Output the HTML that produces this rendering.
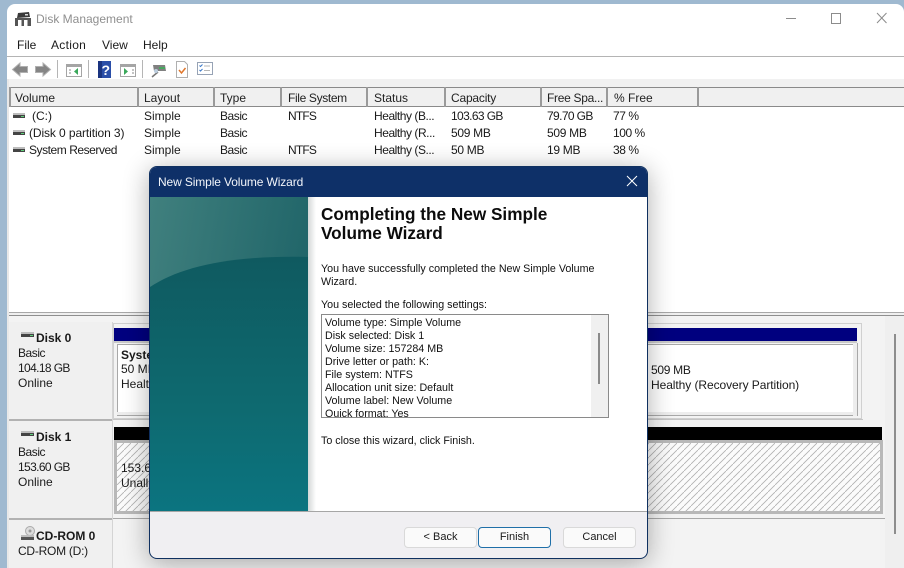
<!DOCTYPE html>
<html><head><meta charset="utf-8"><style>
html,body{margin:0;padding:0}
body{width:904px;height:568px;overflow:hidden;position:relative;background:#9fb9d0;font:12px/14px "Liberation Sans",sans-serif;color:#1a1a1a}
.a{position:absolute;white-space:nowrap}
.b{position:absolute}
.h{top:91px;color:#222}
.hd{position:absolute;top:87px;width:2px;height:20px;background:#9a9a9a}
.d{font-size:10.7px;color:#111;letter-spacing:0}
.n{letter-spacing:-.62px}
.m{letter-spacing:-.3px}
.s{letter-spacing:-.45px}
.f{letter-spacing:-.8px}
.btn{position:absolute;top:527px;height:19px;border:1px solid #d9d9d9;border-radius:4px;background:#fafafa;text-align:center;line-height:19px;color:#1a1a1a;font-size:11px}
</style></head><body>
<div class="b" id="win" style="left:7px;top:4px;width:897px;height:564px;background:#fff;border-radius:8px 8px 0 0"></div>

<!-- app icon -->
<svg class="b" style="left:14px;top:11px" width="18" height="16" viewBox="0 0 18 16">
<path d="M4 2 L15 1 L16 6 L3 7Z" fill="#3a3a3a"/><rect x="11" y="3" width="3" height="1.5" fill="#ddd"/>
<rect x="1" y="7" width="16" height="8" fill="#555"/><rect x="4" y="9" width="3.5" height="6" fill="#fff"/><rect x="10" y="9" width="3.5" height="6" fill="#fff"/>
</svg>
<div class="a" style="left:36px;top:12px;color:#8f8f8f">Disk Management</div>
<!-- window controls -->
<svg class="b" style="left:780px;top:8px" width="110" height="22" viewBox="0 0 110 22" fill="none" stroke="#8c8c8c" stroke-width="1">
<path d="M6 10.5H16"/><rect x="51.5" y="5.5" width="9" height="10"/><path d="M97 5l9.5 10M106.5 5L97 15"/>
</svg>

<div class="a" style="left:17px;top:38px">File</div>
<div class="a" style="left:51px;top:38px;letter-spacing:.3px">Action</div>
<div class="a" style="left:102px;top:38px">View</div>
<div class="a" style="left:143px;top:38px">Help</div>
<div class="b" style="left:7px;top:56px;width:897px;height:1px;background:#b4b4b4"></div>

<!-- toolbar -->
<svg class="b" style="left:7px;top:57px" width="220" height="24" viewBox="7 57 220 24">
<path d="M12.500 69.500L20 63V66.500H27.500V72.500H20V76Z" fill="#858585" stroke="#b0b0b0"/>
<path d="M50.500 69.500L43 63V66.500H35.500V72.500H43V76Z" fill="#858585" stroke="#b0b0b0"/>
<rect x="57" y="60" width="1" height="18" fill="#b5b5b5"/><rect x="88" y="60" width="1" height="18" fill="#b5b5b5"/><rect x="142" y="60" width="1" height="18" fill="#b5b5b5"/>
<rect x="66.500" y="64.500" width="15" height="12" fill="#fff" stroke="#a5a5a5"/><rect x="66" y="64" width="16" height="3" fill="#a5a5a5"/><path d="M69 70h2M69 73h2" stroke="#888"/><path d="M78 68v7l-4-3.500z" fill="#3aa85a"/>
<rect x="98" y="61" width="13" height="17" fill="#2a4ea8"/><rect x="98" y="61" width="4" height="17" fill="#1a3480"/>
<text x="101.500" y="75" font-family="Liberation Sans" font-weight="bold" font-size="14" fill="#fff">?</text>
<rect x="120.500" y="64.500" width="15" height="12" fill="#fff" stroke="#a5a5a5"/><rect x="120" y="64" width="16" height="3" fill="#a5a5a5"/><path d="M132 70h2M132 73h2" stroke="#888"/><path d="M124 68v7l4-3.500z" fill="#3aa85a"/>
<path d="M153 65h12l1 6h-12z" fill="#808080"/><rect x="159" y="67" width="6" height="2" fill="#48a860"/><path d="M158 72l-6 5" stroke="#777" stroke-width="1.500"/><circle cx="156" cy="71" r="2" fill="#bcd"/>
<path d="M176.500 61.500h8l3 3v13h-11z" fill="#fff" stroke="#b0b0b0"/><path d="M179 70l2.500 3 4-5" stroke="#e0762a" stroke-width="1.500" fill="none"/>
<rect x="197.500" y="62.500" width="15" height="12" fill="#fff" stroke="#97a3b5"/><path d="M199.500 65.500l1 1 2-2M199.500 70l1 1 2-2" stroke="#3a78c8" fill="none"/><path d="M204 66h6M204 70.500h6" stroke="#b5b5b5"/>
</svg>

<div class="b" style="left:7px;top:79px;width:897px;height:8px;background:#f1f1f1"></div>
<div class="b" style="left:7px;top:79px;width:2px;height:489px;background:#e8e8e8"></div>

<!-- list header -->
<div class="b" style="left:9px;top:87px;width:895px;height:20px;background:#f0f0f0;border-top:1px solid #8a8a8a;border-bottom:1px solid #8a8a8a;box-sizing:border-box"></div>
<div class="hd" style="left:9px"></div><div class="hd" style="left:137px"></div><div class="hd" style="left:213px"></div><div class="hd" style="left:280px"></div><div class="hd" style="left:366px"></div><div class="hd" style="left:444px"></div><div class="hd" style="left:540px"></div><div class="hd" style="left:606px"></div><div class="hd" style="left:697px"></div>
<div class="a h" style="left:15px">Volume</div><div class="a h" style="left:144px">Layout</div><div class="a h" style="left:220px">Type</div><div class="a h" style="left:288px;letter-spacing:-.35px">File System</div><div class="a h" style="left:374px">Status</div><div class="a h" style="left:451px;letter-spacing:-.2px">Capacity</div><div class="a h" style="left:547px;letter-spacing:-.3px">Free Spa...</div><div class="a h" style="left:614px">% Free</div>

<!-- list rows -->
<svg class="b" style="left:12px;top:112px" width="14" height="44" viewBox="0 0 14 44">
<rect x="1" y="1" width="12" height="2" fill="#bdbdbd"/><rect x="1" y="3" width="12" height="3" fill="#444"/><rect x="9" y="4" width="3" height="1" fill="#5fd07a"/>
<rect x="1" y="18" width="12" height="2" fill="#bdbdbd"/><rect x="1" y="20" width="12" height="3" fill="#444"/><rect x="9" y="21" width="3" height="1" fill="#5fd07a"/>
<rect x="1" y="35" width="12" height="2" fill="#bdbdbd"/><rect x="1" y="37" width="12" height="3" fill="#444"/><rect x="9" y="38" width="3" height="1" fill="#5fd07a"/>
</svg>
<div class="a" style="left:32px;top:109px">(C:)</div><div class="a" style="left:144px;top:109px">Simple</div><div class="a s" style="left:220px;top:109px">Basic</div><div class="a f" style="left:288px;top:109px">NTFS</div><div class="a s" style="left:374px;top:109px">Healthy (B...</div><div class="a n" style="left:451px;top:109px">103.63 GB</div><div class="a n" style="left:547px;top:109px">79.70 GB</div><div class="a s" style="left:613px;top:109px">77 %</div>
<div class="a" style="left:29px;top:126px;letter-spacing:-.1px">(Disk 0 partition 3)</div><div class="a" style="left:144px;top:126px">Simple</div><div class="a s" style="left:220px;top:126px">Basic</div><div class="a s" style="left:374px;top:126px">Healthy (R...</div><div class="a m" style="left:451px;top:126px">509 MB</div><div class="a m" style="left:547px;top:126px">509 MB</div><div class="a s" style="left:613px;top:126px">100 %</div>
<div class="a s" style="left:29px;top:143px">System Reserved</div><div class="a" style="left:144px;top:143px">Simple</div><div class="a s" style="left:220px;top:143px">Basic</div><div class="a f" style="left:288px;top:143px">NTFS</div><div class="a s" style="left:374px;top:143px">Healthy (S...</div><div class="a m" style="left:451px;top:143px">50 MB</div><div class="a m" style="left:547px;top:143px">19 MB</div><div class="a s" style="left:613px;top:143px">38 %</div>

<!-- splitter and lower pane -->
<div class="b" style="left:9px;top:312px;width:895px;height:4px;background:#efefef;border-top:1px solid #a8a8a8;border-bottom:1px solid #8f8f8f;box-sizing:border-box"></div>
<div class="b" style="left:9px;top:316px;width:895px;height:252px;background:#f3f3f3"></div>
<div class="b" style="left:9px;top:322px;width:103px;height:246px;background:#f0f0f0"></div>
<div class="b" style="left:9px;top:419px;width:103px;height:2px;background:#b2b2b2"></div>
<div class="b" style="left:9px;top:518px;width:103px;height:2px;background:#b2b2b2"></div>
<div class="b" style="left:112px;top:322px;width:1px;height:246px;background:#d4d4d4"></div>
<div class="b" style="left:113px;top:518px;width:773px;height:1px;background:#a8a8a8"></div>
<div class="b" style="left:113px;top:419px;width:750px;height:1px;background:#c4c4c4"></div>

<svg class="b" style="left:20px;top:332px" width="15" height="8"><rect x="1" y="0" width="13" height="2" fill="#bdbdbd"/><rect x="1" y="2" width="13" height="3" fill="#444"/><rect x="10" y="3" width="3" height="1" fill="#5fd07a"/></svg>
<div class="a" style="left:36px;top:331px;font-weight:bold">Disk 0</div>
<div class="a" style="left:18px;top:346px;line-height:15px"><span class="s">Basic</span><br><span class="n">104.18 GB</span><br>Online</div>
<svg class="b" style="left:20px;top:431px" width="15" height="8"><rect x="1" y="0" width="13" height="2" fill="#bdbdbd"/><rect x="1" y="2" width="13" height="3" fill="#444"/><rect x="10" y="3" width="3" height="1" fill="#5fd07a"/></svg>
<div class="a" style="left:36px;top:430px;font-weight:bold">Disk 1</div>
<div class="a" style="left:18px;top:445px;line-height:15px"><span class="s">Basic</span><br><span class="n">153.60 GB</span><br>Online</div>
<svg class="b" style="left:20px;top:525px" width="16" height="15"><circle cx="10" cy="6" r="4.500" fill="#ddd" stroke="#aaa"/><circle cx="10" cy="6" r="1.500" fill="#999"/><rect x="1" y="10" width="13" height="2" fill="#bdbdbd"/><rect x="1" y="12" width="13" height="3" fill="#555"/></svg>
<div class="a" style="left:36px;top:529px;font-weight:bold">CD-ROM 0</div>
<div class="a" style="left:18px;top:544px;letter-spacing:-.25px">CD-ROM (D:)</div>

<!-- disk 0 volumes -->
<div class="b" style="left:113px;top:323px;width:749px;height:96px;border:1px solid #d0d0d0;box-sizing:border-box"></div>
<div class="b" style="left:114px;top:328px;width:743px;height:13px;background:#00007f"></div>
<div class="b" style="left:114px;top:341px;width:743px;height:2px;background:#c8c8c8"></div>
<div class="b" style="left:117px;top:344px;width:736px;height:68px;background:#fff;border:1px solid #a8a8a8;border-width:1px 0 0 1px;box-sizing:border-box"></div>
<div class="b" style="left:117px;top:412px;width:741px;height:4px;background:#ededed;border-bottom:1px solid #a8a8a8;box-sizing:border-box"></div>
<div class="b" style="left:853px;top:343px;width:5px;height:73px;background:#ededed;border-right:1px solid #a8a8a8;box-sizing:border-box"></div>
<div class="a" style="left:121px;top:348px;font-weight:bold">Syste</div>
<div class="a" style="left:121px;top:362px;line-height:15px">50 MI<br>Healt</div>
<div class="a m" style="left:651px;top:363px">509 MB</div>
<div class="a" style="left:651px;top:378px;letter-spacing:-.07px">Healthy (Recovery Partition)</div>

<!-- disk 1 volume -->
<div class="b" style="left:114px;top:427px;width:768px;height:13px;background:#000"></div>
<div class="b" style="left:114px;top:440px;width:769px;height:74px;background:#b8b8b8"></div>
<svg class="b" style="left:117px;top:443px" width="763" height="68"><defs><pattern id="hat" width="7" height="7" patternUnits="userSpaceOnUse"><path d="M7 0L0 7" stroke="#b0b0b0" stroke-width=".8"/></pattern></defs><rect width="763" height="68" fill="#fbfbfb"/><rect width="763" height="68" fill="url(#hat)"/></svg>
<div class="a" style="left:121px;top:461px;line-height:15px">153.60<br>Unalle</div>

<!-- outer scrollbar -->
<div class="b" style="left:885px;top:316px;width:19px;height:252px;background:#efefef"></div>
<div class="b" style="left:894px;top:334px;width:2px;height:200px;background:#8d8d8d"></div>

<!-- dialog -->
<div class="b" style="left:149px;top:166px;width:499px;height:393px;border-radius:8px;background:#f0eff2;border:1px solid #0f3060;box-sizing:border-box;box-shadow:0 4px 26px rgba(0,0,0,.32);overflow:hidden">
 <div class="b" style="left:0;top:0;width:497px;height:30px;background:#0e3068"></div>
 <div class="b" style="left:0;top:30px;width:158px;height:314px;overflow:hidden">
 <svg width="158" height="314" viewBox="0 0 158 314" style="display:block">
 <defs>
 <linearGradient id="g1" x1="0" y1="0" x2="1" y2=".35"><stop offset="0" stop-color="#40807e"/><stop offset="1" stop-color="#1f6468"/></linearGradient>
 <linearGradient id="g2" x1="0" y1="0" x2="0" y2="1"><stop offset="0" stop-color="#0f5a60"/><stop offset=".6" stop-color="#0e6a70"/><stop offset="1" stop-color="#0b7480"/></linearGradient>
 </defs>
 <rect width="158" height="314" fill="url(#g1)"/>
 <path d="M0 90C30 70 80 58 158 60V314H0Z" fill="url(#g2)"/>
 </svg></div>
 <div class="b" style="left:158px;top:30px;width:339px;height:314px;background:#fff"></div>
 <div class="b" style="left:158px;top:30px;width:8px;height:314px;background:linear-gradient(90deg,#d4d8d8,#fff)"></div>
 <div class="b" style="left:0;top:344px;width:497px;height:1px;background:#a6a6a6"></div>
</div>
<div class="a" style="left:158px;top:175px;color:#f2f5fa;letter-spacing:-.12px">New Simple Volume Wizard</div>
<svg class="b" style="left:626px;top:175px" width="12" height="12" fill="none" stroke="#fff"><path d="M1 1l10 10M11 1L1 11"/></svg>
<div class="a" style="left:321px;top:205px;font-size:17.200px;line-height:19px;font-weight:bold;color:#0c0c0c">Completing the New Simple<br>Volume Wizard</div>
<div class="a d" style="left:321px;top:263px;line-height:13px">You have successfully completed the New Simple Volume<br>Wizard.</div>
<div class="a d" style="left:321px;top:299px;line-height:13px">You selected the following settings:</div>
<div class="b" style="left:321px;top:314px;width:288px;height:104px;background:#fff;border:1px solid #8a8a8a;box-sizing:border-box;overflow:hidden">
 <div class="a d" style="left:3px;top:2px;line-height:13px">Volume type: Simple Volume<br>Disk selected: Disk 1<br>Volume size: 157284 MB<br>Drive letter or path: K:<br>File system: NTFS<br>Allocation unit size: Default<br>Volume label: New Volume<br>Quick format: Yes</div>
 <div class="b" style="left:269px;top:0;width:17px;height:102px;background:#f0f0f0"></div>
 <div class="b" style="left:276px;top:18px;width:2px;height:51px;background:#8a8a8a"></div>
</div>
<div class="a d" style="left:321px;top:435px;line-height:13px">To close this wizard, click Finish.</div>
<div class="btn" style="left:404px;width:71px">&lt; Back</div>
<div class="btn" style="left:478px;width:71px;border-color:#1f6fa8">Finish</div>
<div class="btn" style="left:563px;width:71px">Cancel</div>
</body></html>
